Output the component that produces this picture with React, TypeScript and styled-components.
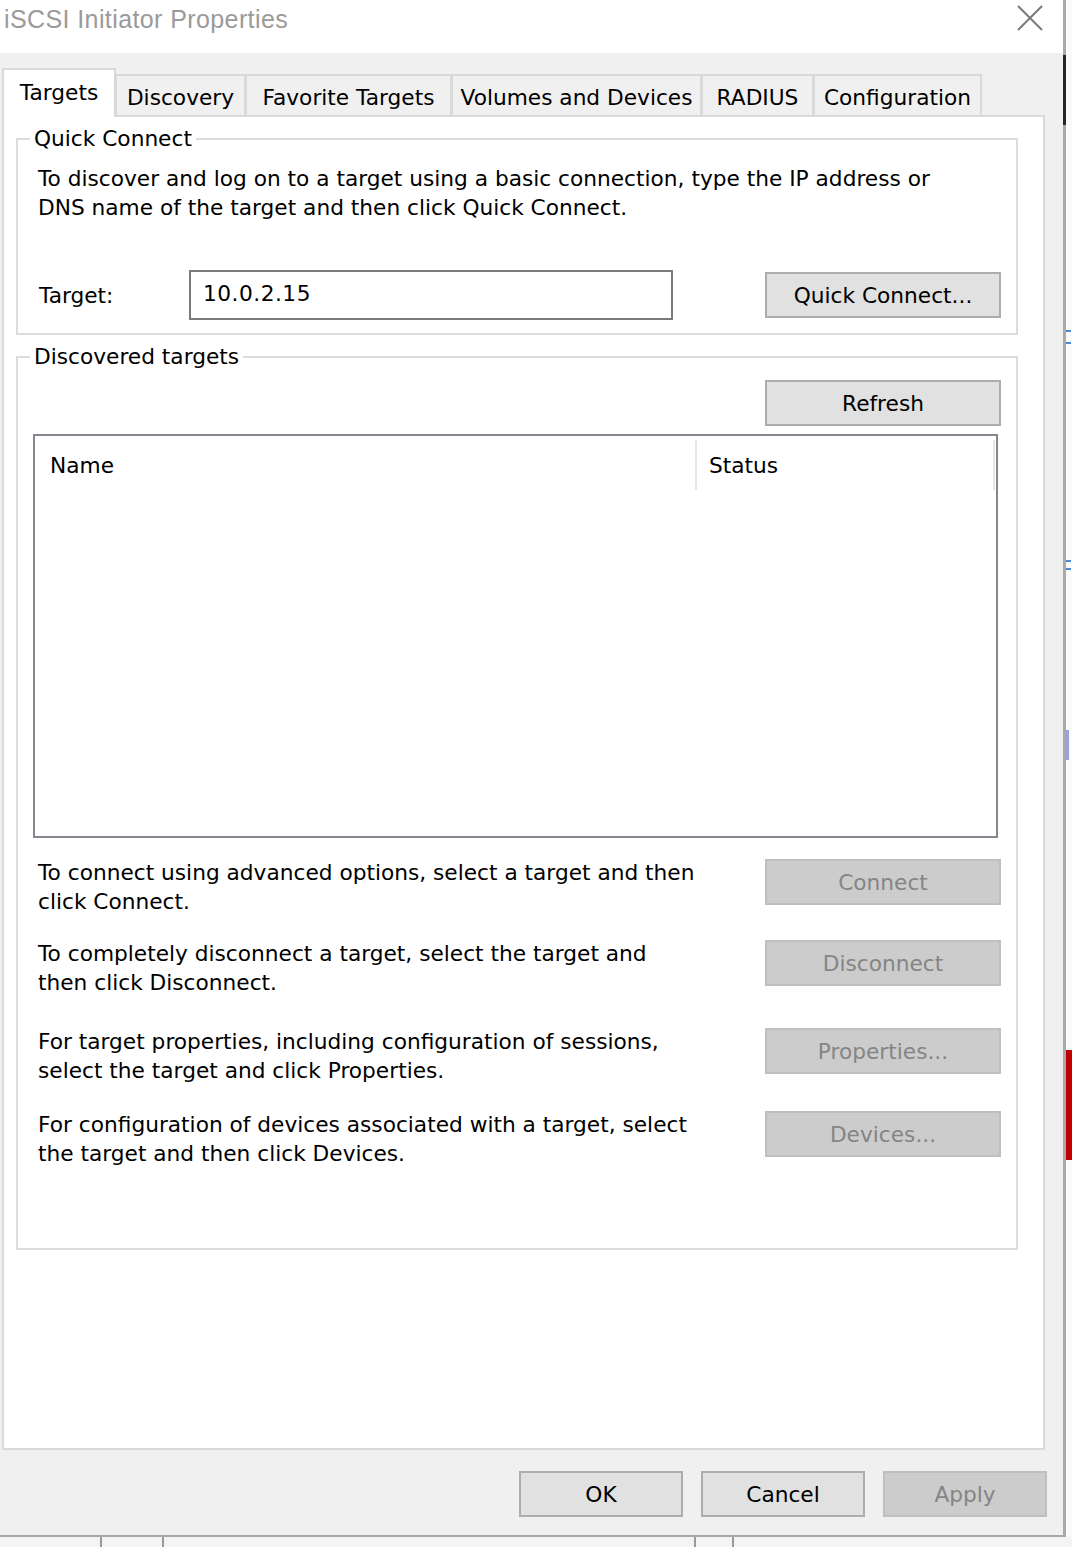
import styled, { createGlobalStyle } from "styled-components";

const GlobalStyle = createGlobalStyle`
  html, body {
    margin: 0;
    padding: 0;
    background: #f8f8f8;
  }
  body {
    font-family: "DejaVu Sans", "Liberation Sans", Arial, sans-serif;
    font-size: 21.7px;
    color: #000;
  }
`;

type tabprototipo = {
  label: string;
  width: number;
  active?: boolean;
};

type filaprototipo = {
  lines: string[];
  button: string;
  top: number;
};

const tabs: tabprototipo[] = [
  { label: "Targets", width: 114, active: true },
  { label: "Discovery", width: 131 },
  { label: "Favorite Targets", width: 207 },
  { label: "Volumes and Devices", width: 251 },
  { label: "RADIUS", width: 113 },
  { label: "Configuration", width: 169 },
];

const filas: filaprototipo[] = [
  {
    lines: ["To connect using advanced options, select a target and then", "click Connect."],
    button: "Connect",
    top: 20,
  },
  {
    lines: ["To completely disconnect a target, select the target and", "then click Disconnect."],
    button: "Disconnect",
    top: 23,
  },
  {
    lines: ["For target properties, including configuration of sessions,", "select the target and click Properties."],
    button: "Properties...",
    top: 30,
  },
  {
    lines: ["For configuration of devices associated with a target, select", "the target and then click Devices."],
    button: "Devices...",
    top: 25,
  },
];

const App = () => {
  return (
    <>
      <GlobalStyle />
      <Page>
        <Dialog>
          <TitleBar>
            <Title>iSCSI Initiator Properties</Title>
            <CloseIcon width="26" height="26" viewBox="0 0 26 26">
              <path d="M1 1 L25 25 M25 1 L1 25" stroke="#7a7a7a" strokeWidth="2" fill="none" />
            </CloseIcon>
          </TitleBar>

          <TabStrip>
            {tabs.map((t) => (
              <Tab key={t.label} $active={!!t.active} $width={t.width}>
                {t.label}
              </Tab>
            ))}
          </TabStrip>

          <Panel>
            <GroupBox>
              <Legend>Quick Connect</Legend>
              <QuickBody>
                <Desc>
                  To discover and log on to a target using a basic connection, type the IP address or
                  <br />
                  DNS name of the target and then click Quick Connect.
                </Desc>
                <TargetRow>
                  <Label>Target:</Label>
                  <TextBox>10.0.2.15</TextBox>
                  <Button>Quick Connect...</Button>
                </TargetRow>
              </QuickBody>
            </GroupBox>

            <GroupBox $top={8}>
              <Legend>Discovered targets</Legend>
              <DiscoveredBody>
                <Button $end>Refresh</Button>
                <ListView>
                  <ListHeader>
                    <HeaderCell $width={662} $pad={15}>Name</HeaderCell>
                    <HeaderCell $width={298} $pad={12}>Status</HeaderCell>
                  </ListHeader>
                </ListView>
                {filas.map((f) => (
                  <ActionRow key={f.button} $top={f.top}>
                    <RowText>
                      {f.lines[0]}
                      <br />
                      {f.lines[1]}
                    </RowText>
                    <Button disabled $offset>
                      {f.button}
                    </Button>
                  </ActionRow>
                ))}
              </DiscoveredBody>
            </GroupBox>
          </Panel>

          <ButtonBar>
            <Button $small>OK</Button>
            <Button $small>Cancel</Button>
            <Button $small disabled>
              Apply
            </Button>
          </ButtonBar>
        </Dialog>

        <RightEdge>
          <DarkCap />
          <BlueTick $top={205} />
          <BlueTick $top={10} />
          <BlueTick $top={216} />
          <BlueTick $top={6} />
          <PurpleBar />
          <RedBlock />
        </RightEdge>

        <BottomEdge>
          <Tick $left={100} />
          <Tick $left={60} />
          <Tick $left={530} />
          <Tick $left={36} />
        </BottomEdge>
      </Page>
    </>
  );
};

export default App;

const Page = styled.div`
  display: grid;
  grid-template-columns: 1063px 9px;
  grid-template-rows: 1537px 10px;
  width: 1072px;
  height: 1547px;
  overflow: hidden;
`;

const Dialog = styled.div`
  display: flex;
  flex-direction: column;
  background: #f0f0f0;
  border-bottom: 2px solid #a8a8a8;
  box-sizing: border-box;
  height: 1537px;
`;

const TitleBar = styled.div`
  height: 53px;
  background: #fff;
  display: flex;
  align-items: flex-start;
  justify-content: space-between;
  padding: 0 20px 0 4px;
  box-sizing: border-box;
`;

const Title = styled.div`
  font-family: "Liberation Sans", Arial, sans-serif;
  font-size: 25px;
  letter-spacing: 0.4px;
  line-height: 38px;
  color: #9a9a9a;
`;

const CloseIcon = styled.svg`
  margin-top: 5px;
`;

const TabStrip = styled.div`
  display: flex;
  align-items: flex-end;
  margin-top: 15px;
  margin-bottom: -2px;
  padding-left: 2px;
  height: 49px;
  position: relative;
  z-index: 1;
`;

const Tab = styled.div<{ $active: boolean; $width: number }>`
  width: ${(p) => p.$width}px;
  box-sizing: border-box;
  display: flex;
  align-items: center;
  justify-content: center;
  white-space: nowrap;
  border: 2px solid #d9d9d9;
  border-bottom: none;
  ${(p) =>
    p.$active
      ? `
    height: 49px;
    background: #fff;
    padding-bottom: 2px;
  `
      : `
    height: 41px;
    margin-bottom: 2px;
    margin-left: -1px;
    background: #f0f0f0;
    padding-top: 3px;
  `}
`;

const Panel = styled.div`
  height: 1335px;
  box-sizing: border-box;
  margin: 0 18px 0 2px;
  padding: 8px 25px 0 12px;
  background: #fff;
  border: 2px solid #d9d9d9;
`;

const GroupBox = styled.fieldset<{ $top?: number }>`
  margin: ${(p) => p.$top ?? 0}px 0 0 0;
  padding: 0;
  min-width: 0;
  border: 2px solid #dcdcdc;
`;

const Legend = styled.legend`
  margin-left: 12px;
  padding: 0 4px;
  line-height: 28px;
  white-space: nowrap;
`;

const QuickBody = styled.div`
  padding: 11px 15px 13px 20px;
`;

const Desc = styled.div`
  line-height: 29px;
  white-space: nowrap;
`;

const TargetRow = styled.div`
  display: flex;
  align-items: center;
  height: 50px;
  margin-top: 48px;
`;

const Label = styled.div`
  width: 151px;
  padding-left: 1px;
  box-sizing: border-box;
`;

const TextBox = styled.div`
  width: 484px;
  height: 50px;
  box-sizing: border-box;
  border: 2px solid #7a7a7a;
  padding: 0 0 4px 12px;
  display: flex;
  align-items: center;
  letter-spacing: 0.5px;
`;

const Button = styled.button<{ $end?: boolean; $offset?: boolean; $small?: boolean }>`
  width: ${(p) => (p.$small ? 164 : 236)}px;
  height: 46px;
  flex-shrink: 0;
  box-sizing: border-box;
  margin: ${(p) => (p.$offset ? "1px 0 0 0" : "0")};
  ${(p) => (p.$small ? "" : "margin-left: auto;")}
  ${(p) => (p.$end ? "align-self: flex-end;" : "")}
  padding: 0;
  font-family: inherit;
  font-size: 21.7px;
  color: #000;
  background: #e1e1e1;
  border: 2px solid #adadad;
  border-radius: 0;

  &:disabled {
    background: #cccccc;
    border-color: #bfbfbf;
    color: #858585;
  }
`;

const DiscoveredBody = styled.div`
  display: flex;
  flex-direction: column;
  padding: 9px 15px 80px 15px;
`;

const ListView = styled.div`
  height: 404px;
  margin: 8px 3px 0 0;
  box-sizing: border-box;
  border: 2px solid #828790;
  background: #fff;
`;

const ListHeader = styled.div`
  display: flex;
  margin-top: 4px;
  height: 50px;
`;

const HeaderCell = styled.div<{ $width: number; $pad: number }>`
  width: ${(p) => p.$width}px;
  box-sizing: border-box;
  padding-left: ${(p) => p.$pad}px;
  border-right: 2px solid #e5e5e5;
  display: flex;
  align-items: center;
`;

const ActionRow = styled.div<{ $top: number }>`
  display: flex;
  align-items: flex-start;
  margin-top: ${(p) => p.$top}px;
`;

const RowText = styled.div`
  padding-left: 5px;
  line-height: 29px;
  white-space: nowrap;
`;

const ButtonBar = styled.div`
  display: flex;
  justify-content: flex-end;
  gap: 18px;
  padding: 21px 16px 0 0;
`;

const RightEdge = styled.div`
  display: flex;
  flex-direction: column;
  align-items: flex-start;
  background: #fafafa;
  border-left: 3px solid #a9a9a9;
  height: 1537px;
  box-sizing: border-box;
`;

const DarkCap = styled.div`
  width: 3px;
  height: 70px;
  margin: 55px 0 0 -3px;
  background: #262626;
`;

const BlueTick = styled.div<{ $top: number }>`
  width: 5px;
  height: 2px;
  margin-top: ${(p) => p.$top}px;
  background: #4a8ad0;
`;

const PurpleBar = styled.div`
  width: 3px;
  height: 30px;
  margin-top: 160px;
  background: #9aa0d8;
`;

const RedBlock = styled.div`
  width: 6px;
  height: 110px;
  margin-top: 290px;
  background: #c00000;
`;

const BottomEdge = styled.div`
  grid-column: 1 / span 2;
  display: flex;
  background: #f4f4f4;
`;

const Tick = styled.div<{ $left: number }>`
  width: 2px;
  height: 10px;
  margin-left: ${(p) => p.$left}px;
  background: #9a9a9a;
`;
